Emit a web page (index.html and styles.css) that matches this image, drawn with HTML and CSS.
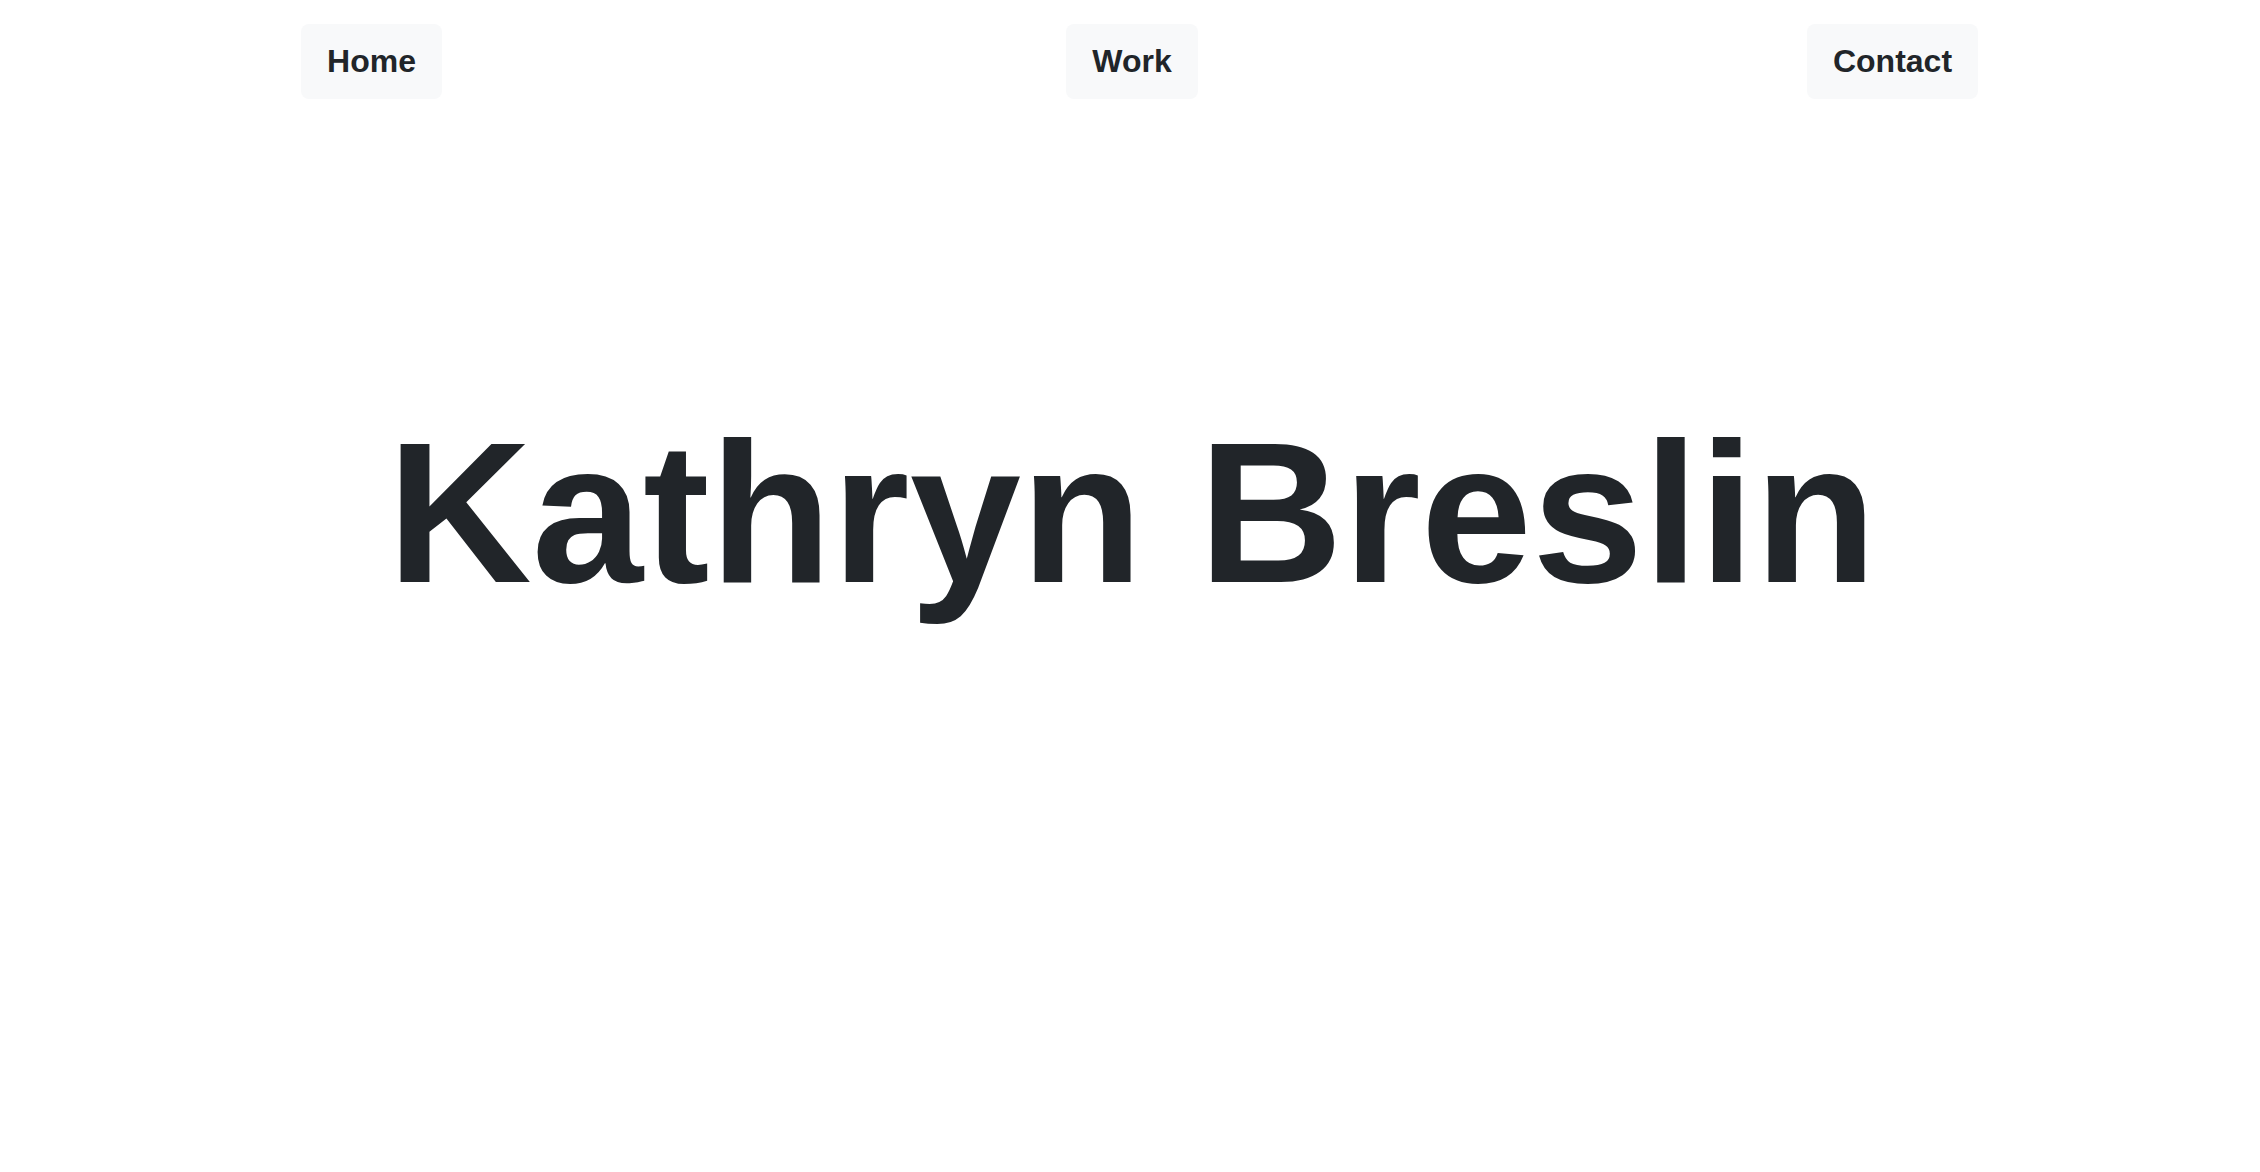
FILE: index.html
```html
<!DOCTYPE html>
<html lang="en">
<head>
<meta charset="utf-8">
<title>Kathryn Breslin</title>
<link rel="stylesheet" href="styles.css">
</head>
<body>
<nav class="nav">
  <div class="nav-cell"><a class="nav-link" href="#">Home</a></div>
  <div class="nav-cell"><a class="nav-link" href="#">Work</a></div>
  <div class="nav-cell"><a class="nav-link" href="#">Contact</a></div>
</nav>
<main class="hero">
  <h1 class="hero-title">Kathryn Breslin</h1>
</main>
</body>
</html>
```
FILE: styles.css
```css
html, body {
  margin: 0;
  padding: 0;
  background: #ffffff;
}
body {
  font-family: "Liberation Sans", Arial, sans-serif;
  color: #212529;
  padding-left: 4px;
}
.nav {
  display: grid;
  grid-template-columns: repeat(3, 760.5px);
  justify-content: center;
  padding-top: 24px;
}
.nav-cell {
  display: flex;
  justify-content: center;
}
.nav-link {
  display: block;
  background: #f8f9fa;
  color: #212529;
  text-decoration: none;
  font-weight: 700;
  font-size: 32px;
  line-height: 36.8px;
  padding: 19px 26px;
  border-radius: 8px;
}
.hero {
  padding-top: 294px;
  text-align: center;
}
.hero-title {
  margin: 0;
  font-size: 200px;
  font-weight: 700;
  line-height: 1.2;
}
```
